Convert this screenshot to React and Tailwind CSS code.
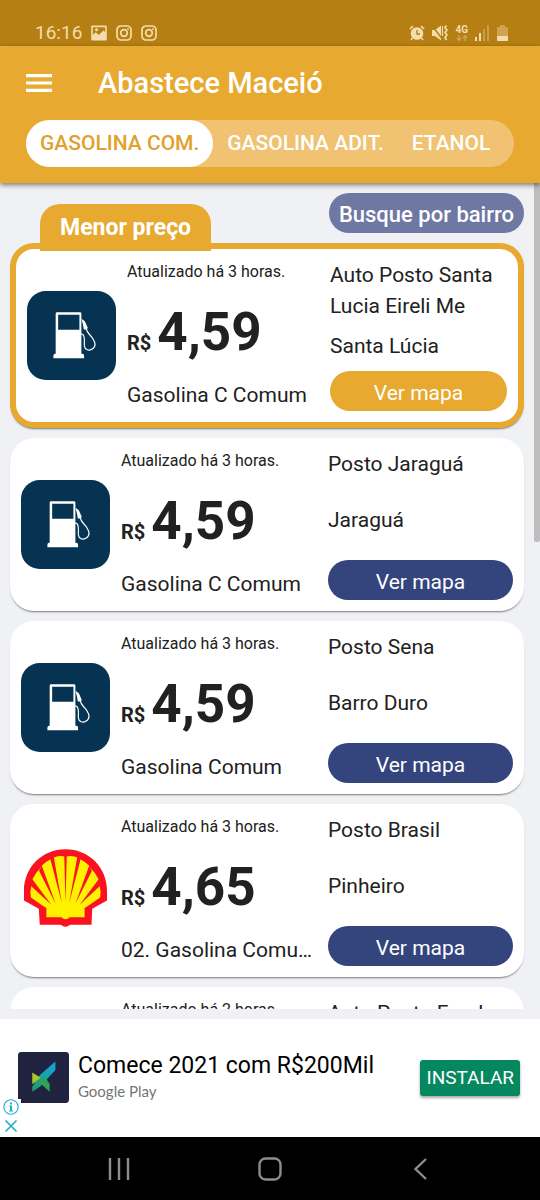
import React, { useState } from 'react';
import clsx from 'clsx';

const TABS = ['GASOLINA COM.', 'GASOLINA ADIT.', 'ETANOL'];

const STATIONS = [
    { id: 1, name: 'Auto Posto Santa Lucia Eireli Me', district: 'Santa Lúcia', fuel: 'Gasolina C Comum', price: '4,59', updated: 'Atualizado há 3 horas.', brand: 'generic' },
    { id: 2, name: 'Posto Jaraguá', district: 'Jaraguá', fuel: 'Gasolina C Comum', price: '4,59', updated: 'Atualizado há 3 horas.', brand: 'generic' },
    { id: 3, name: 'Posto Sena', district: 'Barro Duro', fuel: 'Gasolina Comum', price: '4,59', updated: 'Atualizado há 3 horas.', brand: 'generic' },
    { id: 4, name: 'Posto Brasil', district: 'Pinheiro', fuel: '02. Gasolina Comum', price: '4,65', updated: 'Atualizado há 3 horas.', brand: 'shell' },
    { id: 5, name: 'Auto Posto Farol', district: 'Farol', fuel: 'Gasolina Comum', price: '4,65', updated: 'Atualizado há 2 horas.', brand: 'generic' },
];

const InstagramGlyph = () => (
    <svg viewBox="0 0 16 16" className="size-4" fill="none" stroke="currentColor" strokeWidth="1.7">
        <rect x="1" y="1" width="14" height="14" rx="4" />
        <circle cx="8" cy="8" r="3.3" />
        <circle cx="12" cy="4" r="0.9" fill="currentColor" stroke="none" />
    </svg>
);

const StatusBar = () => (
    <div className="flex items-center justify-between bg-[#b67f13] pt-[22px] pr-8 pb-[2px] pl-[35px] text-[#f3dcae]">
        <div className="flex items-center gap-[9px]">
            <span className="text-[19px] leading-[22px]">16:16</span>
            <svg viewBox="0 0 16 16" className="size-4">
                <path
                    fill="currentColor"
                    fillRule="evenodd"
                    d="M1 .5h14a.8.8 0 0 1 .8.8v13.4a.8.8 0 0 1-.8.8H1a.8.8 0 0 1-.8-.8V1.300A.8.8 0 0 1 1 .5ZM1.800 2.200v7.600l3-2.500 3 2.800 4.600-4.600 1.800 1.600V2.200ZM5.500 3.300a1.500 1.500 0 1 1 0 3 1.500 1.500 0 0 1 0-3Z"
                />
            </svg>
            <InstagramGlyph />
            <InstagramGlyph />
        </div>
        <div className="flex items-center gap-[7px]">
            {/* Alarm */}
            <svg viewBox="0 0 16 16" className="size-4">
                <circle cx="8" cy="8.500" r="6.300" fill="currentColor" />
                <path d="M8 5v4h3" fill="none" stroke="#b67f13" strokeWidth="1.400" />
                <path d="M.8 4 4 1.200M15.200 4 12 1.200M3.500 13 2 15M12.500 13l1.500 2" stroke="currentColor" strokeWidth="1.600" />
            </svg>
            {/* Muted speaker with vibration */}
            <svg viewBox="0 0 16 16" className="size-4">
                <path d="M0 5h3l6-4.500v15L3 11H0Z" fill="currentColor" />
                <path d="M0 .5 11 15" stroke="#b67f13" strokeWidth="1.500" />
                <path d="M10.500 1v10" stroke="currentColor" strokeWidth="1.200" />
                <path d="m14.500.5-1.500 2 2 2.500-2 2.500 2 2.500-2 2.500 1.500 2.500" fill="none" stroke="currentColor" strokeWidth="1.700" />
            </svg>
            <span className="flex flex-col items-center">
                <span className="text-[10px] leading-[10px] font-bold">4G</span>
                <svg viewBox="0 0 12 6" className="h-[6px] w-3 opacity-40" fill="none" stroke="currentColor" strokeWidth="1.300">
                    <path d="M3 0v5M.8 3 3 5.300 5.200 3M9 6V1M6.800 3 9 .7 11.200 3" />
                </svg>
            </span>
            <svg viewBox="0 0 15 16" className="h-4 w-[15px]" fill="currentColor">
                <path d="M0 12h2v4H0ZM4 8h2v8H4Z" />
                <path d="M8 4h2v12H8ZM12 0h2v16h-2Z" opacity=".35" />
            </svg>
            <svg viewBox="0 0 11 16" className="h-4 w-[11px]" fill="currentColor">
                <path d="M3 0h5v2h2.200a.8.8 0 0 1 .8.8V11H0V2.800A.8.8 0 0 1 .8 2H3Z" opacity=".4" />
                <path d="M0 11h11v4.200a.8.8 0 0 1-.8.8H.8a.8.8 0 0 1-.8-.8Z" />
            </svg>
        </div>
    </div>
);

const PumpLogo = () => (
    <svg viewBox="0 0 90 90" className="w-full" role="img" aria-label="Bomba de combustível">
        <rect width="90" height="90" rx="19" fill="#063351" />
        <path
            fill="#fff"
            fillRule="evenodd"
            d="M30 21.500h23.500a1.500 1.500 0 0 1 1.500 1.500v40.500h1a2 2 0 0 1 1.700 2V68H26.700v-2.500a2 2 0 0 1 1.800-2H29V23a1.500 1.500 0 0 1 1-1.500ZM31.500 24v15.300H53V24Z"
        />
        <path d="m55 28 3.500 2.500 3 7-1.500 1.500h-2.500l-1-5.500Z" fill="#fff" />
        <path
            d="M60 38c.5 5 4 6 6.500 10 2.500 4 4 8-1 11-3 1.800-7 .5-7.500-3.500-.3-4 1-9-1.500-11.500l-2-.8"
            fill="none"
            stroke="#fff"
            strokeWidth="1.200"
        />
    </svg>
);

const ShellLogo = () => (
    <svg viewBox="3 2 270 270" className="w-full" role="img" aria-label="Shell">
        <path
            fill="#fb1220"
            d="M12 138C12 66 68 12 138 12s126 54 126 126v29l-45 25-2 49h-62c-6 0-9 6-17 6s-11-6-17-6H60l-3-49-45-25Z"
        />
        <path
            fill="#fff200"
            d="M80 218v-28l-10-6-37-26q-3-19 1-33l7-7-3-16q8-18 22-30l6-10q10-12 22-17l12-7q14-7 30-5l8 1 8-1q16-2 30 5l12 7q12 5 22 17l6 10q14 12 22 30l-3 16 7 7q4 14 1 33l-37 26-10 6v28h-44c-4 0-6 6-14 6s-10-6-14-6Z"
        />
        <path
            fill="#fb1220"
            d="M134 28h8l-4 146ZM91 38l11-5 25 143ZM174 33l11 5-36 138ZM58 78l8-17 42 116ZM210 61l8 17-50 99ZM31 121l7-17 57 76ZM238 104l7 17-64 59Z"
        />
    </svg>
);

const StationCard = ({ station, featured = false }) => (
    <article
        className={clsx(
            'grid gap-[11px] rounded-[24px] bg-white p-[11px] shadow-[0_2px_2px_-1px_rgba(0,0,0,0.5)]',
            featured
                ? 'min-h-[185px] grid-cols-[89px_minmax(0,1fr)_177px] border-6 border-[#e7a930]'
                : 'min-h-[173px] grid-cols-[89px_minmax(0,1fr)_185px]'
        )}
    >
        <div className="flex items-center">
            {station.brand === 'shell' ? <ShellLogo /> : <PumpLogo />}
        </div>

        <div className="flex min-w-0 flex-col justify-between pr-1">
            <p className="text-base leading-6">{station.updated}</p>
            <p className="flex items-baseline gap-[6px] font-bold">
                <span className="text-xl">R$</span>
                <span className="text-[53px] leading-[58px]">{station.price}</span>
            </p>
            <p className="truncate text-[21px] leading-8">{station.fuel}</p>
        </div>

        <div className="flex flex-col justify-between">
            <h2 className="text-[21px] leading-[31px]">{station.name}</h2>
            <p className="text-[21px] leading-[31px]">{station.district}</p>
            <button
                type="button"
                className={clsx(
                    'rounded-full pt-1 text-[21px] leading-9 text-white',
                    featured ? 'bg-[#e7a930]' : 'bg-[#34447d]'
                )}
            >
                Ver mapa
            </button>
        </div>
    </article>
);

const AdBanner = () => (
    <aside className="relative flex items-center justify-between bg-white pt-[33px] pr-5 pb-[34px] pl-[18px]">
        <div className="flex items-center gap-[9px]">
            <svg viewBox="0 0 150 150" className="size-[51px]">
                <defs>
                    <linearGradient id="wing" x1="1" y1="0" x2="0" y2="1">
                        <stop offset="0" stopColor="#12a5dc" />
                        <stop offset="0.5" stopColor="#13a3a6" />
                        <stop offset="1" stopColor="#1f9d62" />
                    </linearGradient>
                </defs>
                <rect width="150" height="150" rx="10" fill="#20233f" />
                <path d="M110 28v25L66 101l-24 16v-15l24-36Z" fill="url(#wing)" />
                <path d="M42 60l25 16-25 19Z" fill="#a9c52f" />
                <path d="M58 85l22-12 13 22v22Z" fill="#2fa15a" />
            </svg>
            <div className="flex flex-col">
                <p className="text-[23px] leading-7 text-black">Comece 2021 com R$200Mil</p>
                <p className="font-[Lato,sans-serif] text-[15px] leading-[23px] text-[#757575]">Google Play</p>
            </div>
        </div>
        <button
            type="button"
            className="rounded-[3px] bg-[#05885f] px-[6px] text-[19px] leading-9 text-white shadow-[0_2px_3px_rgba(0,0,0,0.35)]"
        >
            INSTALAR
        </button>
        <div className="absolute bottom-0 left-0 flex flex-col gap-[3px] bg-white pr-[2px] pb-[3px] pl-[3px] text-[#1fb0cd]">
            <button type="button" aria-label="Sobre este anúncio">
                <svg viewBox="0 0 16 16" className="size-4">
                    <circle cx="8" cy="8" r="7.200" fill="none" stroke="currentColor" strokeWidth="1.100" />
                    <path d="M7 3.500h2v2H7ZM6.200 6.500H9v5h1v1H6v-1h1v-4h-.8Z" fill="currentColor" />
                </svg>
            </button>
            <button type="button" aria-label="Fechar anúncio">
                <svg viewBox="0 0 16 16" className="size-4" stroke="currentColor" strokeWidth="1.700">
                    <path d="m2.500 2.500 11 11M13.500 2.500l-11 11" />
                </svg>
            </button>
        </div>
    </aside>
);

const NavBar = () => (
    <nav className="flex items-center justify-around bg-black px-[43px] pt-5 pb-[19px] text-[#8d8d8d]">
        <button type="button" aria-label="Recentes">
            <svg viewBox="0 0 24 24" className="size-6" stroke="currentColor" strokeWidth="2.400">
                <path d="M3 1v22M12 1v22M21 1v22" />
            </svg>
        </button>
        <button type="button" aria-label="Início">
            <svg viewBox="0 0 24 24" className="size-6" fill="none" stroke="currentColor" strokeWidth="2.400">
                <rect x="1.500" y="1.500" width="21" height="21" rx="6" />
            </svg>
        </button>
        <button type="button" aria-label="Voltar">
            <svg viewBox="0 0 24 24" className="size-6" fill="none" stroke="currentColor" strokeWidth="2.400">
                <path d="M17 2 6.500 12 17 22" />
            </svg>
        </button>
    </nav>
);

const App = () => {
    const [activeTab, setActiveTab] = useState(TABS[0]);
    const [cheapest, ...others] = STATIONS;

    return (
        <div className="flex h-screen flex-col bg-[#eff1f4] font-[Roboto,sans-serif] text-[#212121]">
            <StatusBar />

            <header className="relative z-10 bg-[#e7a930] px-[26px] pb-4 text-white shadow-[0_2px_5px_rgba(0,0,0,0.5)]">
                <div className="flex items-center gap-[46px] py-[19px]">
                    <button type="button" aria-label="Abrir menu">
                        <svg viewBox="0 0 26 18" className="h-[18px] w-[26px]" fill="currentColor">
                            <path d="M0 0h26v3.200H0ZM0 7.400h26v3.200H0ZM0 14.800h26V18H0Z" />
                        </svg>
                    </button>
                    <h1 className="text-[29px] leading-9 font-medium">Abastece Maceió</h1>
                </div>
                <div role="tablist" className="flex rounded-full bg-[#f0c272]">
                    {TABS.map((tab) => (
                        <button
                            key={tab}
                            type="button"
                            role="tab"
                            aria-selected={tab === activeTab}
                            onClick={() => setActiveTab(tab)}
                            className={clsx(
                                'rounded-full px-[14px] text-[21px] leading-[47px] font-medium',
                                tab === activeTab ? 'bg-white text-[#e0a12d]' : 'text-white'
                            )}
                        >
                            {tab}
                        </button>
                    ))}
                </div>
            </header>

            <div className="relative mb-[10px] flex min-h-0 flex-1 flex-col">
                <main className="flex-1 overflow-y-auto pr-4 pl-[10px] [scrollbar-width:none]">
                    <div className="flex items-start justify-between pt-[10px] pb-[10px] pl-[30px]">
                        <span className="relative -mb-[18px] mt-[11px] rounded-t-[20px] bg-[#e7a930] px-5 text-[23px] leading-[47px] font-bold text-white">
                            Menor preço
                        </span>
                        <button
                            type="button"
                            className="rounded-full bg-[#6e78a2] px-[10px] pt-1 text-[22px] leading-9 font-medium text-white"
                        >
                            Busque por bairro
                        </button>
                    </div>
                    <div className="flex flex-col gap-[10px]">
                        <StationCard station={cheapest} featured />
                        {others.map((station) => (
                            <StationCard key={station.id} station={station} />
                        ))}
                    </div>
                </main>
                <div className="absolute top-0 right-0 h-[359px] w-[6px] rounded-b-xs bg-[#bdbdbd]" />
            </div>

            <AdBanner />
            <NavBar />
        </div>
    );
};

export default App;
